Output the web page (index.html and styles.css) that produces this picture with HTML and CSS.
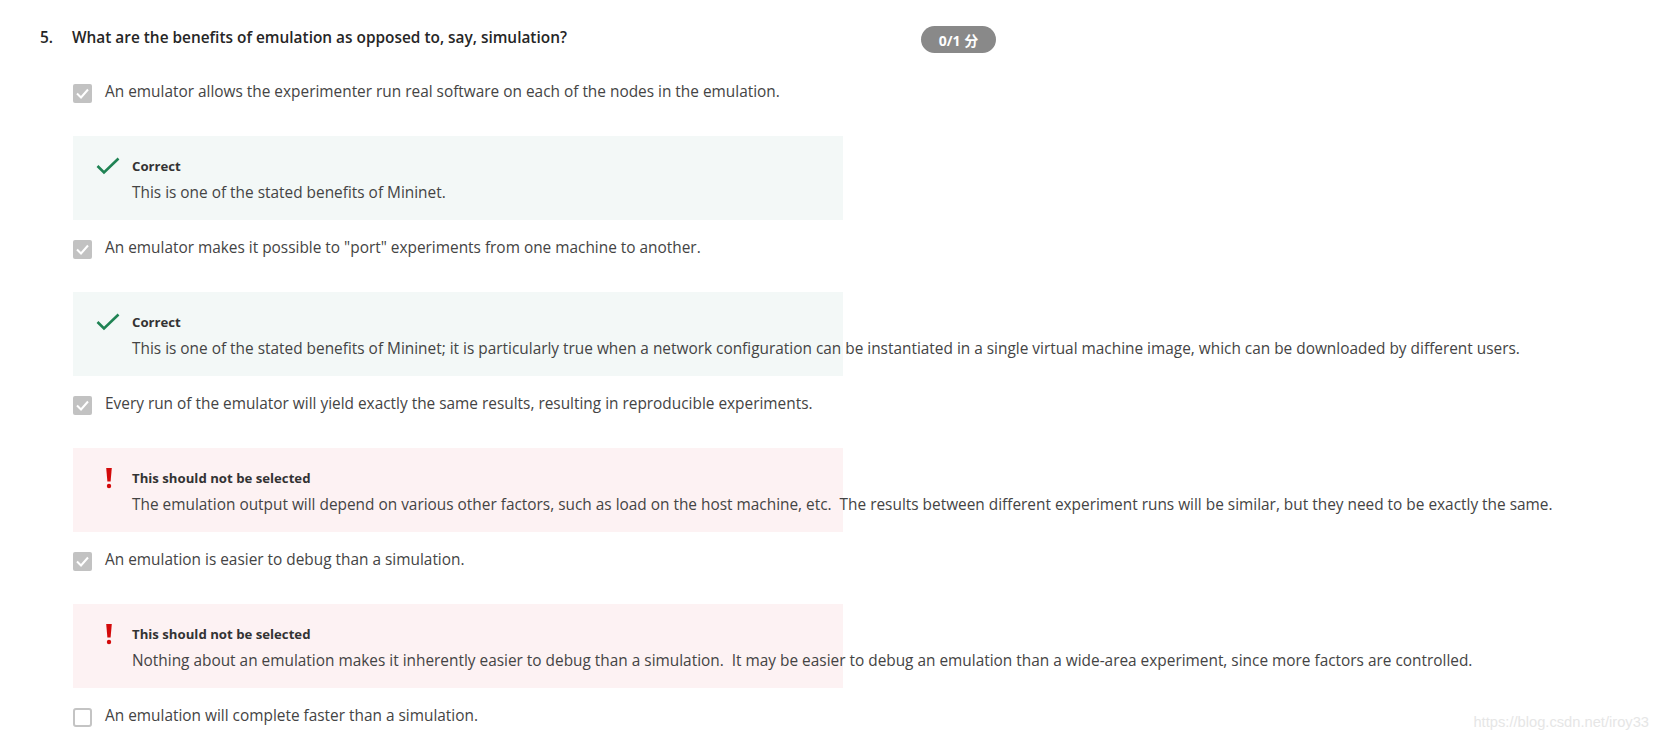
FILE: index.html
```html
<!DOCTYPE html>
<html lang="en">
<head>
<meta charset="utf-8">
<title>Quiz question 5</title>
<link rel="stylesheet" href="styles.css">
</head>
<body>
<div class="page">
  <div class="q-head">
    <div class="q-num">5.</div>
    <div class="q-title">What are the benefits of emulation as opposed to, say, simulation?</div>
    <div class="badge">0/1 分</div>
  </div>

  <div class="options">
    <div class="opt">
      <div class="opt-row">
        <span class="cb checked"><svg viewBox="0 0 19 19" width="19" height="19"><polyline points="4,9.5 8,13.5 15,5.5" fill="none" stroke="#fff" stroke-width="2"/></svg></span>
        <span class="opt-text">An emulator allows the experimenter run real software on each of the nodes in the emulation.</span>
      </div>
      <div class="fb correct">
        <div class="fb-icon"><svg viewBox="0 0 24 18" width="24" height="18"><polyline points="1.5,9 8,15.5 22.5,1.5" fill="none" stroke="#1f8354" stroke-width="2.6"/></svg></div>
        <div class="fb-body">
          <div class="fb-head">Correct</div>
          <div class="fb-text">This is one of the stated benefits of Mininet.</div>
        </div>
      </div>
    </div>

    <div class="opt">
      <div class="opt-row">
        <span class="cb checked"><svg viewBox="0 0 19 19" width="19" height="19"><polyline points="4,9.5 8,13.5 15,5.5" fill="none" stroke="#fff" stroke-width="2"/></svg></span>
        <span class="opt-text">An emulator makes it possible to "port" experiments from one machine to another.</span>
      </div>
      <div class="fb correct">
        <div class="fb-icon"><svg viewBox="0 0 24 18" width="24" height="18"><polyline points="1.5,9 8,15.5 22.5,1.5" fill="none" stroke="#1f8354" stroke-width="2.6"/></svg></div>
        <div class="fb-body">
          <div class="fb-head">Correct</div>
          <div class="fb-text">This is one of the stated benefits of Mininet; it is particularly true when a network configuration can be instantiated in a single virtual machine image, which can be downloaded by different users.</div>
        </div>
      </div>
    </div>

    <div class="opt">
      <div class="opt-row">
        <span class="cb checked"><svg viewBox="0 0 19 19" width="19" height="19"><polyline points="4,9.5 8,13.5 15,5.5" fill="none" stroke="#fff" stroke-width="2"/></svg></span>
        <span class="opt-text">Every run of the emulator will yield exactly the same results, resulting in reproducible experiments.</span>
      </div>
      <div class="fb wrong">
        <div class="fb-icon"><svg class="excl" viewBox="0 0 8 21" width="8" height="21"><path d="M1.2 0 H6.8 L5.6 13.5 H2.4 Z" fill="#d30a0a"/><circle cx="4" cy="18" r="2.2" fill="#d30a0a"/></svg></div>
        <div class="fb-body">
          <div class="fb-head">This should not be selected</div>
          <div class="fb-text">The emulation output will depend on various other factors, such as load on the host machine, etc.&nbsp; The results between different experiment runs will be similar, but they need to be exactly the same.</div>
        </div>
      </div>
    </div>

    <div class="opt">
      <div class="opt-row">
        <span class="cb checked"><svg viewBox="0 0 19 19" width="19" height="19"><polyline points="4,9.5 8,13.5 15,5.5" fill="none" stroke="#fff" stroke-width="2"/></svg></span>
        <span class="opt-text">An emulation is easier to debug than a simulation.</span>
      </div>
      <div class="fb wrong">
        <div class="fb-icon"><svg class="excl" viewBox="0 0 8 21" width="8" height="21"><path d="M1.2 0 H6.8 L5.6 13.5 H2.4 Z" fill="#d30a0a"/><circle cx="4" cy="18" r="2.2" fill="#d30a0a"/></svg></div>
        <div class="fb-body">
          <div class="fb-head">This should not be selected</div>
          <div class="fb-text">Nothing about an emulation makes it inherently easier to debug than a simulation.&nbsp; It may be easier to debug an emulation than a wide-area experiment, since more factors are controlled.</div>
        </div>
      </div>
    </div>

    <div class="opt">
      <div class="opt-row">
        <span class="cb empty"></span>
        <span class="opt-text">An emulation will complete faster than a simulation.</span>
      </div>
    </div>
  </div>
</div>
<div class="watermark">https://blog.csdn.net/iroy33</div>
</body>
</html>
```

FILE: styles.css
```css
html, body {
  margin: 0;
  padding: 0;
  background: #ffffff;
}

body {
  font-family: "Open Sans", "Noto Sans CJK SC", sans-serif;
  color: #444444;
  width: 1671px;
  height: 741px;
  overflow: hidden;
  position: relative;
}

.page {
  padding: 26px 0 0 40px;
}

.q-head {
  display: flex;
  align-items: center;
  height: 27px;
  margin-bottom: 30px;
}

.q-num,
.q-title {
  font-size: 15.4px;
  font-weight: 600;
  color: #262626;
  line-height: 20px;
  margin-top: -4px;
}

.q-num {
  width: 32px;
}

.q-title {
  width: 849px;
}

.badge {
  width: 75px;
  height: 27px;
  border-radius: 14px;
  background: #898989;
  color: #ffffff;
  font-size: 14px;
  font-weight: 700;
  display: flex;
  align-items: center;
  justify-content: center;
  font-family: "Open Sans", "Noto Sans CJK SC", sans-serif;
}

.options {
  padding-left: 33px;
}

.opt-row {
  display: flex;
  align-items: center;
  height: 20px;
  gap: 13px;
}

.cb {
  width: 19px;
  height: 19px;
  box-sizing: border-box;
  border-radius: 2px;
  flex: none;
  display: block;
}

.cb svg {
  display: block;
}

.cb.checked {
  background: #c2c2c2;
}

.cb.empty {
  border: 2px solid #c4c4c4;
  border-radius: 3px;
  background: #ffffff;
}

.opt-text {
  font-size: 15.4px;
  line-height: 20px;
  color: #444444;
  white-space: nowrap;
  margin-top: -2px;
}

.fb {
  width: 770px;
  height: 84px;
  box-sizing: border-box;
  margin-top: 33px;
  margin-bottom: 19px;
  padding: 21px 0 0 23px;
  display: flex;
}

.fb.correct {
  background: #f3f8f7;
}

.fb.wrong {
  background: #fdf2f3;
}

.fb-icon {
  width: 36px;
  flex: none;
  height: 18px;
  position: relative;
}

.fb-icon svg {
  display: block;
}

.fb-icon .excl {
  margin-left: 9px;
  margin-top: -1px;
}

.fb-body {
  white-space: nowrap;
}

.fb-head {
  font-size: 13.2px;
  font-weight: 700;
  line-height: 18px;
  color: #333333;
}

.fb-text {
  margin-top: 8px;
  font-size: 15.4px;
  line-height: 20px;
  color: #444444;
}

.watermark {
  position: absolute;
  right: 22px;
  top: 712px;
  font-family: "Liberation Sans", Arial, sans-serif;
  font-size: 14.7px;
  line-height: 20px;
  color: #e6e6e6;
  white-space: nowrap;
}
```
